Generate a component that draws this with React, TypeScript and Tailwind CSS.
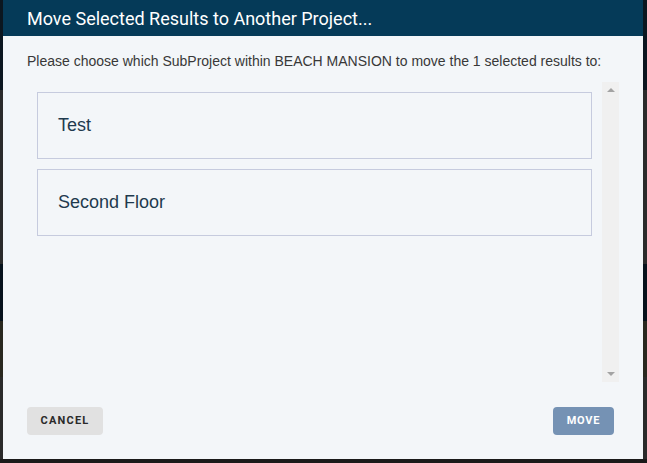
const subProjects = ['Test', 'Second Floor'];

function ScrollTrack() {
  return (
    <div className="w-[17px] bg-[#f0f0f0] flex flex-col items-center justify-between py-[6px]">
      <div className="w-0 h-0 border-l-[4px] border-r-[4px] border-b-[4px] border-l-transparent border-r-transparent border-b-[#a3a3a3]" />
      <div className="w-0 h-0 border-l-[4px] border-r-[4px] border-t-[4px] border-l-transparent border-r-transparent border-t-[#a3a3a3]" />
    </div>
  );
}

export default function App() {
  return (
    <div className="relative w-[647px] h-[463px] overflow-hidden bg-[#1c1c1c]">
      {/* Dimmed page behind the modal */}
      <div className="flex flex-col h-full">
        <div className="h-[90px] bg-[#0b1620]" />
        <div className="h-[174px] bg-[#2b2b2b]" />
        <div className="h-[57px] bg-[#07121c]" />
        <div className="h-[56px] bg-[#29281f]" />
        <div className="flex-1 bg-[#2a2a2a]" />
        <div className="h-[4px] bg-[#1a1a1a]" />
      </div>

      {/* Modal */}
      <div className="absolute left-[3px] top-0 w-[640px] h-[459px] bg-[#f3f6f9] flex flex-col">
        <div className="h-[36px] bg-[#053a58] flex items-center px-[24px]">
          <h2 className="text-white text-[18px] font-['Roboto',sans-serif]">
            Move Selected Results to Another Project...
          </h2>
        </div>

        <p className="mt-[17px] px-[24px] text-[14px] leading-[17px] text-[#383838] font-['Liberation_Sans',Arial,sans-serif]">
          Please choose which SubProject within BEACH MANSION to move the 1 selected results to:
        </p>

        <div className="mt-[12px] mx-[24px] h-[300px] flex">
          <div className="flex-1 flex flex-col gap-[10px] p-[10px]">
            {subProjects.map((name) => (
              <div
                key={name}
                className="h-[67px] border border-[#c6cbde] flex items-center px-[20px] text-[18px] text-[#1f3a4e] font-['Liberation_Sans',Arial,sans-serif]"
              >
                {name}
              </div>
            ))}
          </div>
          <ScrollTrack />
        </div>

        <div className="mt-[25px] flex justify-between pl-[24px] pr-[29px]">
          <button className="h-[28px] w-[76px] rounded-[4px] bg-[#e1e1e1] text-[#2a2a2a] text-[11px] font-bold tracking-[1.2px] font-['Roboto',sans-serif]">
            CANCEL
          </button>
          <button className="h-[28px] w-[61px] rounded-[4px] bg-[#7592b4] text-white text-[11px] font-bold tracking-[0.8px] font-['Roboto',sans-serif]">
            MOVE
          </button>
        </div>
      </div>
    </div>
  );
}
